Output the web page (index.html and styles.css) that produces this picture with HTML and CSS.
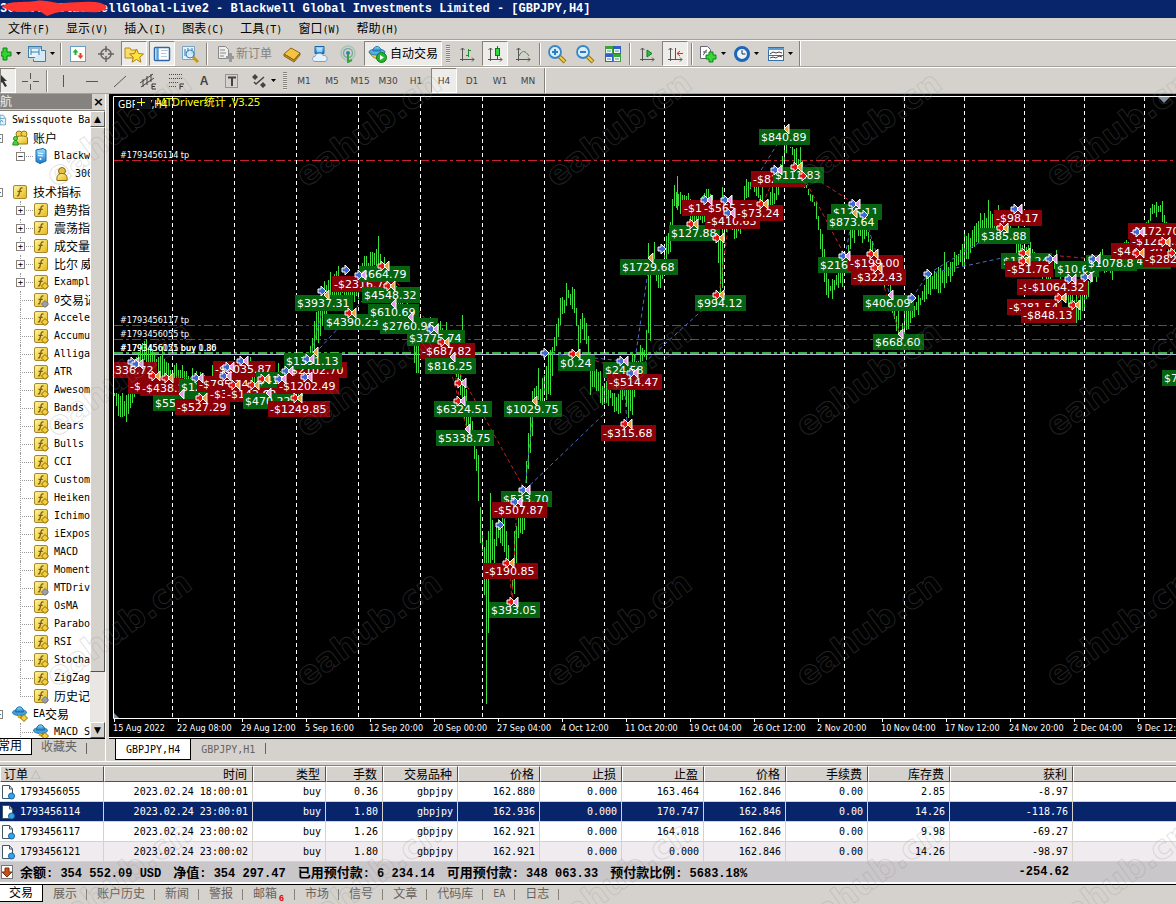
FILE: index.html
```html
<!DOCTYPE html>
<html lang="zh-CN">
<head>
<meta charset="utf-8">
<title>BlackwellGlobal-Live2 - [GBPJPY,H4]</title>
<link rel="stylesheet" href="styles.css">
</head>
<body>
<svg class="sprite" aria-hidden="true">
  <defs>
    <linearGradient id="gold" x1="0" y1="0" x2="1" y2="1"><stop offset="0" stop-color="#fff7a0"/><stop offset="1" stop-color="#e3b818"/></linearGradient>
    <linearGradient id="sky" x1="0" y1="0" x2="0" y2="1"><stop offset="0" stop-color="#9be0ff"/><stop offset="1" stop-color="#1878c8"/></linearGradient>
    <symbol id="fn" viewBox="0 0 16 16"><rect x="1.500" y="1.500" width="13" height="13" rx="1.500" fill="url(#gold)" stroke="#a8862a"/><path d="M10.500 4.200c-1.600-.8-2.300.3-2.600 2l-.9 4c-.3 1.500-.9 2-2 1.400M5.500 7.300h4.200" fill="none" stroke="#7d5a10" stroke-width="1.300"/></symbol>
    <symbol id="fc" viewBox="0 0 16 16"><use href="#fn"/><path d="M12 8.500l3.500 3.500-3.500 3.500-3.500-3.500z" fill="#f4cf3c" stroke="#8b6a12"/></symbol>
    <symbol id="fg" viewBox="0 0 16 16"><use href="#fn"/><path d="M12 8.500l3.500 3.500-3.500 3.500-3.500-3.500z" fill="#9aa0b0" stroke="#70758a"/></symbol>
    <symbol id="user" viewBox="0 0 16 16"><circle cx="8" cy="5" r="3.500" fill="#e4c044" stroke="#8b6c10"/><path d="M3 14.500c-1-5 2-7 5-7s6 2 5 7z" fill="url(#gold)" stroke="#8b6c10"/></symbol>
    <symbol id="users" viewBox="0 0 16 16"><circle cx="7" cy="4" r="3" fill="#f0d050" stroke="#9a7a18"/><circle cx="12" cy="4" r="3" fill="#f0d050" stroke="#9a7a18"/><path d="M4 14V7.500c1-2 10-2 11.500 0V14z" fill="url(#gold)" stroke="#9a7a18"/><circle cx="3.500" cy="8.500" r="2" fill="#5ad84c" stroke="#258a22"/><path d="M.8 15c0-6 5.500-6 5.500 0z" fill="#48d040" stroke="#258a22"/></symbol>
    <symbol id="server" viewBox="0 0 16 16"><path d="M3 2l7-1.500 3 1.500v11l-6 2.500-4-2z" fill="url(#sky)" stroke="#176aa8"/><path d="M5 5l5 .5M5 7.500l5 .5" stroke="#fff"/><circle cx="7.500" cy="11" r="1" fill="#fff"/></symbol>
    <symbol id="hat" viewBox="0 0 16 16"><ellipse cx="7.500" cy="6.500" rx="7" ry="3" fill="#3fa2dc" stroke="#1d6fa8"/><path d="M3.500 6c0-7 8-7 8 0z" fill="url(#sky)" stroke="#1d6fa8"/><path d="M6 10c2 1 3 2 5 2" stroke="#d9a520" stroke-width="3" fill="none"/><path d="M12 8.500l3.500 3.500-3.500 3.500-3.500-3.500z" fill="#f6cf3c" stroke="#8b6a12"/></symbol>
    <symbol id="home" viewBox="0 0 10 16"><path d="M0 2h4l3 4v8H0z" fill="#e9f5fc" stroke="#4a94bd"/><path d="M0 6h6M0 11l2-3 2 3" stroke="#4a94bd" fill="none"/></symbol>
    <symbol id="doc" viewBox="0 0 16 16"><path d="M2.500 1.500h7l3 3.500v9.500h-10z" fill="#fff" stroke="#3c5666"/><path d="M9.500 1.500V5h3" fill="none" stroke="#3c5666"/><circle cx="11.500" cy="12" r="3" fill="#36a4e4" stroke="#1765a4"/></symbol>
    <symbol id="caret" viewBox="0 0 7 4"><path d="M1 0h5L3.500 3z" fill="#000"/></symbol>
    <symbol id="axes" viewBox="0 0 18 18"><path d="M4.500 3v13M2 14.500h14M2.500 5l2-2 2 2M14 12.500l2 2-2 2" fill="none" stroke="#555"/></symbol>
    <symbol id="glass" viewBox="0 0 20 20"><path d="M12 12l6 6" stroke="#9a7408" stroke-width="4"/><path d="M12 12l5.500 5.500" stroke="#f0cf4a" stroke-width="2"/><circle cx="8" cy="8" r="6" fill="#d5efff" stroke="#3a86c4" stroke-width="1.800"/></symbol>
  </defs>
</svg>

<header class="title">
  <h1>300000: BlackwellGlobal-Live2 - Blackwell Global Investments Limited - [GBPJPY,H4]</h1>
  <svg class="scribble" width="112" height="18" aria-hidden="true"><path d="M2 7C8 0 24 3 36 1c10-2 18 3 28 2 16-1 34-3 41 2 4 3-1 6-7 7-10 1-28-2-38 0l-5 1-8 3-6-4-3-1C28 12 14 13 9 10z" fill="#ff3430"/></svg>
</header>

<nav class="menu">
  <button>文件<i>(F)</i></button><button>显示<i>(V)</i></button><button>插入<i>(I)</i></button><button>图表<i>(C)</i></button><button>工具<i>(T)</i></button><button>窗口<i>(W)</i></button><button>帮助<i>(H)</i></button>
</nav>

<div class="bar" role="toolbar" aria-label="标准">
  <button class="tb first" aria-label="新图表"><svg width="12" height="18"><path d="M0 7h2V3h4v4h4v4H6v4H2v-4H0z" fill="#2fd42c" stroke="#0b8414"/></svg><svg class="car"><use href="#caret"/></svg></button>
  <button class="tb wide" aria-label="配置"><svg width="20" height="18"><rect x="1.500" y="1.500" width="13" height="11" fill="#e6f3fb" stroke="#3c7dae"/><path d="M6.500 14v2.500h12v-11H15" fill="#d4e9f6" stroke="#3c7dae"/><path d="M4 4v6M4 7h8M12 4v6M2 3h12" stroke="#3c7dae" fill="none"/></svg><svg class="car"><use href="#caret"/></svg></button>
  <span class="sep"></span>
  <button class="tb" aria-label="市场报价"><svg width="18" height="18"><rect x="1.500" y="1.500" width="15" height="15" fill="#fff" stroke="#64a0c4"/><path d="M6.500 4l3 3.500h-2V10h-2V7.500h-2z" fill="#24b12c"/><path d="M11.500 14l-3-3.500h2V8h2v2.500h2z" fill="#e0442e"/></svg></button>
  <button class="tb" aria-label="数据窗口"><svg width="18" height="18"><circle cx="9" cy="9" r="5" fill="none" stroke="#666" stroke-width="1.500"/><path d="M9 1v6M9 11v6M1 9h6M11 9h6" stroke="#666" stroke-width="1.500"/></svg></button>
  <button class="tb on" aria-label="导航"><svg width="20" height="18"><path d="M1 3h5l1 2h5v8H1z" fill="#fbdc6c" stroke="#b08a20"/><path d="M12.500 4l2 4.500 5 .5-3.800 3.200 1.200 5-4.400-2.700-4.400 2.700 1.200-5L5.500 9l5-.5z" fill="#ffe23c" stroke="#a8820e"/></svg></button>
  <button class="tb on" aria-label="终端"><svg width="18" height="18"><rect x="1.500" y="2.500" width="15" height="13" rx="1" fill="#fff" stroke="#2a67a8" stroke-width="1.500"/><path d="M4.500 3v12" stroke="#5ba0dc" stroke-width="2.500"/><path d="M8 5.500h7M8 8.500h5M8 11.500h6" stroke="#b4c8d8"/></svg></button>
  <button class="tb" aria-label="策略测试"><svg width="18" height="18"><path d="M1.500 1.500h12v13h-12z" fill="#e6f2fa" stroke="#7ba4c0"/><path d="M4 4v7M7 3v5M11 3v6" stroke="#2c78b4"/><path d="M12 12l5 5" stroke="#c69a18" stroke-width="3"/><circle cx="9" cy="9" r="4" fill="#cfeaff" fill-opacity=".7" stroke="#3b82b8"/></svg></button>
  <span class="sep"></span>
  <button class="tb order" disabled><svg width="18" height="18"><path d="M2.500 1.500h7l3 3v9h-10z" fill="#eee" stroke="#888"/><path d="M4 5h5M4 8h6M4 11h4" stroke="#888"/><path d="M10 11h3V8h3v3h3v3h-3v3h-3v-3h-3z" fill="#999"/></svg>新订单</button>
  <button class="tb" aria-label="MetaEditor"><svg width="20" height="18"><path d="M2 9l7-6 9 5-6 7z" fill="#f5c341" stroke="#8c650c"/><path d="M2 9l10 6 6-7v2l-6 7-10-6z" fill="#c9922a" stroke="#8c650c"/></svg></button>
  <button class="tb" aria-label="云"><svg width="18" height="18"><path d="M4 1.500h9v7H4z" fill="url(#sky)" stroke="#1664a4"/><path d="M6 4h5M6 6h5" stroke="#fff"/><path d="M4 16.500c-4-1-3-5 0-5 1-4 7-4 8-1 4-1 6 5 2 6z" fill="#e8f0fa" stroke="#7f9fbd"/></svg></button>
  <button class="tb" aria-label="信号"><svg width="18" height="18" fill="none"><circle cx="9" cy="8" r="7" stroke="#a4c4b4" stroke-width="1.500"/><circle cx="9" cy="8" r="4.500" stroke="#76a9a4" stroke-width="1.500"/><circle cx="9" cy="8" r="2" fill="#2880bc"/><path d="M9 9v8l4-2" stroke="#3aa33e" stroke-width="2"/></svg></button>
  <button class="tb on auto"><svg width="20" height="18"><path d="M2 8c3 6 9 8 13 1z" fill="#f4cd4c" stroke="#a1791c"/><ellipse cx="9" cy="7" rx="8" ry="3" fill="#56b0e4" stroke="#2578ae"/><path d="M5 6c0-6 8-6 8 0z" fill="url(#sky)" stroke="#2578ae"/><circle cx="13.500" cy="12.500" r="5" fill="#23b52c" stroke="#0c7b18"/><path d="M12 10l4 2.500-4 2.500z" fill="#fff"/></svg>自动交易</button>
  <span class="grip"></span>
  <button class="tb" aria-label="柱状图"><svg width="18" height="18"><use href="#axes"/><path d="M10.500 4v8M8 10.500h2.500M10.500 5.500H13" stroke="#1c8f2c" fill="none"/></svg></button>
  <button class="tb on" aria-label="蜡烛图"><svg width="18" height="18"><use href="#axes"/><path d="M11.500 1v13" stroke="#0c7b1c"/><rect x="9.500" y="3.500" width="4" height="7" fill="#2fd83c" stroke="#0c7b1c"/></svg></button>
  <button class="tb" aria-label="折线图"><svg width="18" height="18"><use href="#axes"/><path d="M5 11c3-6 6-6 10 0" stroke="#2d9a3c" fill="none"/></svg></button>
  <span class="sep"></span>
  <button class="tb" aria-label="放大"><svg width="20" height="20"><use href="#glass"/><path d="M5 8h6M8 5v6" stroke="#2b7cc0" stroke-width="2"/></svg></button>
  <button class="tb" aria-label="缩小"><svg width="20" height="20"><use href="#glass"/><path d="M5 8h6" stroke="#2b7cc0" stroke-width="2"/></svg></button>
  <button class="tb" aria-label="平铺"><svg width="18" height="18"><path d="M1 1h8v8H1z" fill="#3ba534"/><path d="M9 1h8v8H9z" fill="#2f60c4"/><path d="M1 9h8v8H1z" fill="#2f60c4"/><path d="M9 9h8v8H9z" fill="#3ba534"/><path d="M2 4h6v4H2zM10 4h6v4h-6zM2 12h6v4H2zM10 12h6v4h-6z" fill="#eef8ee"/><path d="M3 6h4M11 6h4M3 14h4M11 14h4" stroke="#5a8ab0"/></svg></button>
  <span class="sep"></span>
  <button class="tb" aria-label="自动滚动"><svg width="18" height="18"><use href="#axes"/><path d="M9 5l5 3.500L9 12z" fill="#2cbf3a" stroke="#0f7d1f"/></svg></button>
  <button class="tb on" aria-label="图表平移"><svg width="18" height="18"><use href="#axes"/><path d="M9.500 3v11" stroke="#555"/><path d="M17 8.500h-5M14 6l-3 2.500 3 2.500" fill="none" stroke="#c23222"/></svg></button>
  <span class="sep"></span>
  <button class="tb wide" aria-label="指标"><svg width="20" height="18"><path d="M2.500 1.500h7l3 3v9h-10z" fill="#fff" stroke="#667"/><path d="M5 10c2 0 1-5 4-5M5 7h4" stroke="#555" fill="none"/><path d="M8 10h3V7h4v3h3v4h-3v3h-4v-3H8z" fill="#34d834" stroke="#0c8418"/></svg><svg class="car"><use href="#caret"/></svg></button>
  <button class="tb wide" aria-label="周期"><svg width="18" height="18"><circle cx="9" cy="9" r="6.500" fill="#e8f5ff" stroke="#1d66b8" stroke-width="3"/><path d="M9 5v4h3.500" stroke="#333" fill="none"/></svg><svg class="car"><use href="#caret"/></svg></button>
  <button class="tb wide" aria-label="模板"><svg width="18" height="18"><rect x="1.500" y="2.500" width="15" height="13" fill="#fff" stroke="#3570a8"/><path d="M1 4h16" stroke="#5b9ed4" stroke-width="2"/><path d="M3 9l3-2 3 1 3-1 3 1M3 13l3-1 3 1 3-2 3 1" stroke="#444" fill="none"/><path d="M2 10.500h14" stroke="#3570a8"/></svg><svg class="car"><use href="#caret"/></svg></button>
  <span class="end"></span>
</div>

<div class="bar tools" role="toolbar" aria-label="画线">
  <button class="tb on cursor" aria-label="光标"><svg width="12" height="18"><path d="M0 3l6 6H3l3 5-2 1-3-5-1 1z" fill="#333"/></svg></button>
  <button class="tb" aria-label="十字线"><svg width="18" height="18"><path d="M9.500 1v6M9.500 12v6M1 9.500h6M12 9.500h6" stroke="#555"/></svg></button>
  <span class="sep"></span>
  <button class="tb" aria-label="垂直线"><svg width="18" height="18"><path d="M8.500 3v12" stroke="#555"/></svg></button>
  <button class="tb" aria-label="水平线"><svg width="18" height="18"><path d="M3 9.500h12" stroke="#555"/></svg></button>
  <button class="tb" aria-label="趋势线"><svg width="18" height="18"><path d="M3 15L15 4" stroke="#555"/></svg></button>
  <button class="tb" aria-label="通道"><svg width="18" height="18"><path d="M1 11L14 2M2 15L15 6M4 7v8M8 4v9M12 2v8" stroke="#444"/><path d="M17 12h-4v5h4M13 14.500h3" stroke="#333" fill="none"/></svg></button>
  <button class="tb" aria-label="斐波那契"><svg width="18" height="18"><path d="M2 2.500h14M2 6.500h14M2 10.500h10" stroke="#444" stroke-dasharray="1 1"/><path d="M2 14.500h8" stroke="#444" stroke-dasharray="1 1"/><path d="M17 12h-4v5.500M13 14.500h3" stroke="#333" fill="none"/></svg></button>
  <button class="tb letter">A</button>
  <button class="tb" aria-label="文本标签"><svg width="18" height="18"><rect x="2.500" y="2.500" width="12" height="13" fill="none" stroke="#555" stroke-dasharray="1 1"/><path d="M5 5.500h8M9 5v9" stroke="#444" stroke-width="2"/></svg></button>
  <button class="tb wide" aria-label="箭头"><svg width="18" height="18"><path d="M2 5l3-3 3 3-3 3zM10 13l3-3 3 3-3 3z" fill="#444"/><path d="M4 10l2 2 8-7" stroke="#444" stroke-width="1.500" fill="none"/></svg><svg class="car"><use href="#caret"/></svg></button>
  <span class="grip"></span>
  <button class="tb">M1</button><button class="tb">M5</button><button class="tb">M15</button><button class="tb">M30</button><button class="tb">H1</button><button class="tb on">H4</button><button class="tb">D1</button><button class="tb">W1</button><button class="tb">MN</button>
  <span class="end"></span>
</div>

<main class="work">
  <aside class="nav">
    <div class="navhead"><h2>航</h2><button aria-label="关闭">×</button></div>
    <div class="treebox">
      <ul class="tree">
        <li class="top"><svg class="half"><use href="#home"/></svg>Swissquote Bank</li>
        <li class="l0"><b class="box">−</b><svg><use href="#users"/></svg><span class="cj">账户</span></li>
        <li class="l1"><b class="box">−</b><svg><use href="#server"/></svg>Blackwell</li>
        <li class="l2"><svg><use href="#user"/></svg>300000</li>
        <li class="l0"><b class="box">−</b><svg><use href="#fn"/></svg><span class="cj">技术指标</span></li>
        <li class="l1"><b class="box">+</b><svg><use href="#fn"/></svg><span class="cj">趋势指标</span></li>
        <li class="l1"><b class="box">+</b><svg><use href="#fn"/></svg><span class="cj">震荡指标</span></li>
        <li class="l1"><b class="box">+</b><svg><use href="#fn"/></svg><span class="cj">成交量</span></li>
        <li class="l1"><b class="box">+</b><svg><use href="#fn"/></svg><span class="cj">比尔 威廉</span></li>
        <li class="l1"><b class="box">+</b><svg><use href="#fc"/></svg>Examples</li>
        <li class="l1 leaf"><svg><use href="#fg"/></svg>0<span class="cj">交易记录</span></li>
        <li class="l1 leaf"><svg><use href="#fc"/></svg>Accelerator</li>
        <li class="l1 leaf"><svg><use href="#fc"/></svg>Accumulation</li>
        <li class="l1 leaf"><svg><use href="#fc"/></svg>Alligator</li>
        <li class="l1 leaf"><svg><use href="#fc"/></svg>ATR</li>
        <li class="l1 leaf"><svg><use href="#fc"/></svg>Awesome</li>
        <li class="l1 leaf"><svg><use href="#fc"/></svg>Bands</li>
        <li class="l1 leaf"><svg><use href="#fc"/></svg>Bears</li>
        <li class="l1 leaf"><svg><use href="#fc"/></svg>Bulls</li>
        <li class="l1 leaf"><svg><use href="#fc"/></svg>CCI</li>
        <li class="l1 leaf"><svg><use href="#fc"/></svg>Custom</li>
        <li class="l1 leaf"><svg><use href="#fc"/></svg>Heiken Ashi</li>
        <li class="l1 leaf"><svg><use href="#fc"/></svg>Ichimoku</li>
        <li class="l1 leaf"><svg><use href="#fc"/></svg>iExposure</li>
        <li class="l1 leaf"><svg><use href="#fc"/></svg>MACD</li>
        <li class="l1 leaf"><svg><use href="#fc"/></svg>Momentum</li>
        <li class="l1 leaf"><svg><use href="#fg"/></svg>MTDriver</li>
        <li class="l1 leaf"><svg><use href="#fc"/></svg>OsMA</li>
        <li class="l1 leaf"><svg><use href="#fc"/></svg>Parabolic</li>
        <li class="l1 leaf"><svg><use href="#fc"/></svg>RSI</li>
        <li class="l1 leaf"><svg><use href="#fc"/></svg>Stochastic</li>
        <li class="l1 leaf"><svg><use href="#fc"/></svg>ZigZag</li>
        <li class="l1 leaf last"><svg><use href="#fg"/></svg><span class="cj">历史记录</span></li>
        <li class="l0"><b class="box">−</b><svg><use href="#hat"/></svg>EA<span class="cj">交易</span></li>
        <li class="l1 leaf"><svg><use href="#hat"/></svg>MACD Sample</li>
      </ul>
      <div class="scroll"><button aria-label="向上">▲</button><span class="thumb"></span><button aria-label="向下">▼</button></div>
    </div>
    <div class="navtabs"><button class="sel">常用</button><button>收藏夹</button><span class="bar1"></span></div>
  </aside>
  <section class="chartcol">
    <svg class="chart" role="img" aria-label="GBPJPY,H4"><g id="plot" transform="translate(-109,-94)"></g></svg>
    <div class="charttabs"><button class="sel">GBPJPY,H4</button><button>GBPJPY,H1</button><span class="bar1"></span></div>
  </section>
</main>

<section class="terminal">
  <table class="orders">
    <colgroup><col class="c-id"><col class="c-time"><col class="c-type"><col class="c-lot"><col class="c-sym"><col class="c-n"><col class="c-n"><col class="c-n"><col class="c-n"><col class="c-n"><col class="c-n"><col class="c-profit"><col></colgroup>
    <thead><tr><th>订单 <small>△</small></th><th>时间</th><th>类型</th><th>手数</th><th>交易品种</th><th>价格</th><th>止损</th><th>止盈</th><th>价格</th><th>手续费</th><th>库存费</th><th>获利</th><th></th></tr></thead>
    <tbody>
      <tr><td><svg><use href="#doc"/></svg>1793456055</td><td>2023.02.24 18:00:01</td><td>buy</td><td>0.36</td><td>gbpjpy</td><td>162.880</td><td>0.000</td><td>163.464</td><td>162.846</td><td>0.00</td><td>2.85</td><td>-8.97</td><td></td></tr>
      <tr class="picked"><td><svg><use href="#doc"/></svg>1793456114</td><td>2023.02.24 23:00:01</td><td>buy</td><td>1.80</td><td>gbpjpy</td><td>162.936</td><td>0.000</td><td>170.747</td><td>162.846</td><td>0.00</td><td>14.26</td><td>-118.76</td><td></td></tr>
      <tr><td><svg><use href="#doc"/></svg>1793456117</td><td>2023.02.24 23:00:02</td><td>buy</td><td>1.26</td><td>gbpjpy</td><td>162.921</td><td>0.000</td><td>164.018</td><td>162.846</td><td>0.00</td><td>9.98</td><td>-69.27</td><td></td></tr>
      <tr class="alt"><td><svg><use href="#doc"/></svg>1793456121</td><td>2023.02.24 23:00:02</td><td>buy</td><td>1.80</td><td>gbpjpy</td><td>162.921</td><td>0.000</td><td>0.000</td><td>162.846</td><td>0.00</td><td>14.26</td><td>-98.97</td><td></td></tr>
    </tbody>
  </table>
  <div class="summary">
    <svg width="14" height="16"><rect x="1.500" y="1.500" width="11" height="13" fill="#fff" stroke="#777"/><path d="M5 4h4v4h3l-5 5-5-5h3z" fill="#c8501c" stroke="#7e2c0c"/></svg>
    <div class="facts"><span>余额<i>: 354 552.09 USD</i></span><span>净值<i>: 354 297.47</i></span><span>已用预付款<i>: 6 234.14</i></span><span>可用预付款<i>: 348 063.33</i></span><span>预付款比例<i>: 5683.18%</i></span></div>
    <output>-254.62</output>
  </div>
  <div class="termtabs">
    <button class="sel">交易</button><button>展示</button><button>账户历史</button><button>新闻</button><button>警报</button><button class="mail">邮箱<sub>6</sub></button><button>市场</button><button>信号</button><button>文章</button><button>代码库</button><button class="ea">EA</button><button>日志</button>
  </div>
</section>

<svg class="mark" aria-hidden="true" id="mark"></svg>
<script src="chart.js"></script>
</body>
</html>
```

FILE: styles.css
```css
* { box-sizing: border-box; }
html, body { height: 100%; }
body {
  margin: 0;
  display: flex;
  flex-direction: column;
  overflow: hidden;
  position: relative;
  background: #d5d2cd;
  color: #000;
  font: 12px/18px "Liberation Sans", "Noto Sans CJK SC", sans-serif;
}
button { font: inherit; color: inherit; background: none; border: 0; padding: 0; margin: 0; white-space: nowrap; }
i { font: 10px "DejaVu Sans Mono", monospace; }
.sprite { position: absolute; width: 0; height: 0; }

.title { position: relative; height: 18px; background: #08246b; color: #fff; overflow: hidden; flex: none; }
.title h1 { margin: 0; font: bold 12px/18px "Liberation Mono", monospace; white-space: pre; }
.scribble { position: absolute; left: 0; top: 0; }

.menu { display: flex; height: 22px; flex: none; padding-left: 8px; gap: 16px; border-bottom: 1px solid #a5a29c; }
.menu button { line-height: 20px; }

.bar { display: flex; align-items: center; height: 27px; flex: none; border-top: 1px solid #fff; border-bottom: 1px solid #a5a29c; }
.tb { display: flex; align-items: center; justify-content: center; flex: none; width: 28px; height: 25px; border: 1px solid transparent; }
.tb svg { flex: none; }
.tb .car { width: 7px; height: 4px; margin-left: 2px; }
.tb.on { background: #eeece8; border-color: #85827c #fff #fff #85827c; margin: 0 1px; width: 26px; }
.tb.first { width: 24px; justify-content: flex-start; }
.tb.wide { width: 34px; }
.tb.order { width: 68px; gap: 2px; color: #85827c; font-size: 12px; }
.tb.auto { width: 78px; gap: 2px; margin-left: 2px; }
.sep { width: 2px; height: 22px; margin: 0 2px; border-left: 1px solid #85827c; border-right: 1px solid #fff; flex: none; }
.grip { width: 4px; height: 18px; margin: 0 3px; flex: none; background: repeating-linear-gradient(#85827c 0 1px, #e8e6e2 1px 2px); }
.end { width: 2px; height: 25px; margin-left: 2px; border-left: 1px solid #85827c; border-right: 1px solid #fff; }
.tools { color: #444; font: 9px "DejaVu Sans", sans-serif; }
.tools .cursor { width: 16px; margin: 0; justify-content: flex-start; }
.tools .letter { font: bold 12px "Liberation Sans", sans-serif; }

.work { flex: 1; min-height: 0; display: flex; }
.nav { width: 106px; flex: none; display: flex; flex-direction: column; border-right: 1px solid #fff; }
.navhead { display: flex; height: 16px; flex: none; }
.navhead h2 { margin: 0; flex: 1; font: 12px/14px "Noto Sans CJK SC", sans-serif; color: #eee; background: #85827f; height: 15px; }
.navhead button { width: 13px; font: bold 13px/14px "DejaVu Sans", sans-serif; }
.treebox { flex: 1; min-height: 0; display: flex; background: #fff; border-top: 1px solid #85827c; }
.tree { flex: 1; min-width: 0; margin: 0; padding: 0; overflow: hidden; list-style: none; font: 10px/18px "DejaVu Sans Mono", monospace; }
.tree li { display: flex; align-items: center; height: 18px; white-space: pre; position: relative; }
.tree svg { width: 16px; height: 16px; flex: none; margin-right: 5px; z-index: 1; }
.tree .half { width: 8px; margin-right: 4px; }
.tree .l0 { padding-left: 12px; }
.tree .l1 { padding-left: 33px; }
.tree .l2 { padding-left: 54px; }
.cj { font: 12px/18px "Noto Sans CJK SC", sans-serif; }
.tree .box { position: absolute; left: 16px; top: 5px; width: 9px; height: 9px; border: 1px solid #85827c; background: #fff; font: 9px/6px "DejaVu Sans Mono", monospace; text-align: center; z-index: 1; }
.tree .l0 .box { left: -6px; }
.tree .l1::before { content: ""; position: absolute; left: 20px; top: 0; width: 12px; height: 9px; border-left: 1px dotted #999; border-bottom: 1px dotted #999; }
.tree .leaf:not(.last)::after { content: ""; position: absolute; left: 20px; top: 9px; height: 9px; border-left: 1px dotted #999; }
.scroll { width: 15px; flex: none; display: flex; flex-direction: column; background: #e9e7e3; }
.scroll button { height: 16px; font: 9px/12px "DejaVu Sans", sans-serif; }
.scroll button, .thumb { background: #d5d2cd; border: 1px solid; border-color: #fff #55524e #55524e #fff; }
.thumb { height: 87%; }
.scroll button:last-child { margin-top: auto; }
.navtabs, .charttabs { display: flex; align-items: flex-start; flex: none; }
.navtabs { height: 23px; border-top: 1px solid #000; color: #66635f; }
.navtabs button { height: 16px; line-height: 15px; padding: 0 9px; }
.navtabs .sel { width: 32px; padding: 0; text-align: left; text-indent: -2px; background: #fff; color: #000; border: solid #000; border-width: 0 1px 1px 0; }
.bar1 { width: 1px; height: 11px; margin-top: 4px; background: #66635f; }
.chartcol { flex: 1; min-width: 0; display: flex; flex-direction: column; margin-left: 3px; }
.chart { flex: 1; min-height: 0; width: 100%; display: block; background: #000; border-bottom: 1px solid #fff; }
.charttabs { height: 23px; border-top: 1px solid #000; padding-left: 6px; color: #66635f; font: 10px "DejaVu Sans Mono", monospace; }
.charttabs button { height: 21px; padding: 0 10px; }
.charttabs .sel { background: #fff; color: #000; border: solid #000; border-width: 0 1px 1px; }

.chart text { fill: #fff; font: 9px "DejaVu Sans Condensed", "DejaVu Sans", sans-serif; }
.chart .pl { font: 11px "DejaVu Sans", sans-serif; }
.chart .head { font: 10px "Noto Sans", sans-serif; }
.chart .driver { fill: #ffff00; font: 11px "Noto Sans", "Noto Sans CJK SC", sans-serif; }

.terminal { flex: none; border-top: 1px solid #fff; padding-top: 3px; }
.orders { width: 100%; table-layout: fixed; border-collapse: separate; border-spacing: 0; background: #fff; border-top: 1px solid #85827c; font: 10px/18px "DejaVu Sans Mono", monospace; }
.c-id { width: 104px; } .c-time { width: 149px; } .c-type { width: 73px; } .c-lot { width: 57px; }
.c-sym { width: 75px; } .c-n { width: 82px; } .c-profit { width: 123px; }
.orders th { height: 16px; padding: 0 5px; font: 12px/14px "Noto Sans CJK SC", sans-serif; text-align: right; background: #d5d2cd; border: 1px solid; border-color: #fff #55524e #55524e #fff; white-space: nowrap; }
.orders th:first-child, .orders td:first-child { text-align: left; padding-left: 3px; }
.orders th small { color: #aaa7a2; font-size: 10px; line-height: 10px; }
.orders td { height: 20px; padding: 0 4px; text-align: right; white-space: nowrap; border-right: 1px solid #d5d2cd; border-bottom: 1px solid #d5d2cd; }
.orders td:first-child { padding-left: 0; }
.orders td:last-child, .orders th:last-child { border-right: 0; }
.orders td svg { width: 16px; height: 16px; margin-right: 4px; vertical-align: middle; }
.picked td { background: #08246b; color: #fff; }
.alt td { background: #efebef; }
.summary { display: flex; align-items: center; height: 20px; background: #c9c7c9; font: bold 13px/18px "Noto Sans CJK SC", sans-serif; white-space: pre; }
.summary svg { margin-right: 6px; flex: none; }
.summary i { font: bold 12px "Liberation Mono", monospace; }
.facts { display: flex; flex: none; gap: 12px; width: 870px; }
.summary output { width: 179px; text-align: right; font: bold 12px "Liberation Mono", monospace; }
.termtabs { display: flex; height: 20px; margin-top: 2px; border-top: 1px solid #000; box-shadow: 0 -2px #fff; color: #66635f; }
.termtabs button { height: 17px; line-height: 16px; padding: 0 10px; position: relative; }
.termtabs button:not(.sel)::after { content: ""; position: absolute; right: 0; top: 4px; width: 1px; height: 11px; background: #85827c; }
.termtabs .sel { padding: 0 9px; background: #fff; color: #000; border: solid #000; border-width: 0 1px 1px 0; }
.termtabs .mail { padding-right: 18px; }
.termtabs sub { position: absolute; left: 36px; bottom: -2px; color: #e00; font: bold 9px/12px "Liberation Sans", sans-serif; }
.termtabs .ea { font: 10px "DejaVu Sans Mono", monospace; }

.mark { position: absolute; left: 0; top: 0; width: 100%; height: 100%; pointer-events: none; }
.mark text { font: bold 33px "DejaVu Sans", sans-serif; fill: none; stroke: #8c8c8c; stroke-opacity: .25; text-anchor: middle; }
```

FILE: chart.js
```javascript
const plot = document.getElementById('plot');
const NS = 'http://www.w3.org/2000/svg';
function add(tag, attrs, text, parent = plot) {
  const e = document.createElementNS(NS, tag);
  for (const k in attrs) e.setAttribute(k, attrs[k]);
  if (text) e.textContent = text;
  parent.appendChild(e);
  return e;
}

// Period separators
const grid = [172, 234, 296, 358, 420, 482, 544];
for (let x = 604; x < 2600; x += 60) grid.push(x);

// Price levels
function level(y, stroke, width, dash) {
  add('path', { d: `M114 ${y}H2600`, stroke, 'stroke-width': width, 'stroke-dasharray': dash });
}
level(160.5, '#c8202c', 1, '9 3 3 3');
level(325.5, '#c8202c', 1, '9 3 3 3');
level(339.5, '#c8202c', 1, '9 3 3 3');
level(354.5, '#b0b4d8', 1, 'none');
level(353, '#3cb43c', 2, '9 3 3 3');

// Price range by time: x, high, low
const range = [114,385,400,118,388,415,124,395,422,128,388,415,132,370,400,140,345,380,144,338,365,150,345,365,155,350,370,164,355,385,170,368,390,178,362,380,190,370,392,205,372,400,220,365,395,232,370,395,245,365,390,260,375,400,275,375,400,290,370,395,300,375,400,306,360,385,312,330,360,316,310,345,322,300,330,328,280,310,335,268,300,345,280,300,358,275,298,365,255,280,375,252,270,379,245,268,385,265,290,395,285,310,405,300,325,412,325,350,417,340,375,425,325,345,433,315,335,440,318,345,450,335,365,460,370,395,465,385,430,470,405,440,475,430,460,477,450,490,480,500,540,482,530,555,484,540,600,486,570,700,488,540,640,490,500,570,494,530,562,498,515,540,502,520,545,506,530,560,509,555,575,512,575,590,514,530,600,517,520,545,520,500,530,524,500,530,526,460,490,529,420,465,532,385,440,536,378,405,540,380,405,545,365,400,550,345,395,553,335,360,557,320,345,561,300,320,565,290,315,568,286,305,575,290,312,578,320,350,582,315,335,587,325,350,590,355,395,595,362,385,600,375,400,605,380,405,610,385,405,615,390,410,620,385,412,624,375,400,628,365,420,632,350,415,636,360,385,640,345,365,644,348,362,646,330,360,648,245,330,650,260,340,652,250,270,655,255,280,659,265,298,662,255,285,665,245,270,670,220,250,673,180,215,677,185,205,680,190,215,690,195,220,695,205,230,700,200,225,708,190,215,712,190,230,716,210,240,718,240,270,720,240,300,722,230,290,724,200,235,730,205,235,735,215,240,740,205,230,745,180,200,750,180,195,753,168,190,758,180,200,763,200,215,768,195,210,773,190,205,778,170,195,782,150,180,785,132,150,788,135,150,792,145,160,797,155,170,802,160,180,807,180,195,812,190,205,817,205,225,822,230,260,825,250,290,829,280,298,833,275,295,838,270,290,842,260,285,846,250,270,849,230,250,853,215,240,858,215,235,863,220,240,868,230,245,872,240,255,876,255,275,880,260,280,884,270,290,888,265,285,892,290,315,896,310,335,900,325,345,904,305,340,908,295,325,912,300,320,920,290,310,925,275,300,930,272,300,935,270,290,940,265,290,950,260,280,955,250,272,960,245,262,965,240,265,970,230,260,975,222,245,980,215,240,992,208,235,996,204,230,1000,210,240,1010,220,240,1020,235,255,1030,245,265,1040,255,275,1050,265,285,1056,250,270,1060,270,290,1065,280,305,1070,290,310,1075,295,320,1078,300,325,1082,285,310,1087,280,300,1090,270,290,1095,255,280,1100,245,270,1105,255,275,1110,260,278,1115,250,275,1120,245,265,1130,240,260,1140,230,255,1147,215,240,1150,205,225,1155,200,215,1160,198,215,1163,202,225,1168,235,255,1176,240,260];
let seed = 7;
const rnd = () => (seed = (seed * 16807) % 2147483647) / 2147483647;
let bars = '';
for (let x = 114, i = 0; x <= 1176; x += 2) {
  while (i + 3 < range.length - 3 && range[i + 3] < x) i += 3;
  const t = Math.min(1, (x - range[i]) / (range[i + 3] - range[i]));
  const hi = range[i + 1] + (range[i + 4] - range[i + 1]) * t;
  const lo = range[i + 2] + (range[i + 5] - range[i + 2]) * t;
  const spike = rnd() > 0.92 ? 10 : 0;
  bars += `M${x + 0.5} ${Math.round(hi + rnd() * 11 - 2 - spike)}V${Math.round(lo + rnd() * 11 - 7)}`;
}
bars += 'M486.500 540V704M378.500 236V260M462.500 315V345M677.500 176V210M722.500 187V240M490.500 493V560M407.500 295V330';
add('path', { d: bars, stroke: '#3ce03c' });
grid.forEach(x => add('path', { d: `M${x + 0.5} 97V718`, stroke: '#fff', 'stroke-dasharray': '4 3' }));

// Links between entry and exit
const blue = [[310,359,326,295],[310,359,352,313],[352,313,392,265],[525,490,534,401],[525,490,604,414],[633,373,650,258],[500,525,517,502],[633,373,719,295],[662,249,693,224],[727,200,763,204],[750,188,786,130],[845,256,855,204],[864,215,890,295],[928,274,1003,228],[928,274,1025,253],[912,298,928,274],[1095,259,1139,253],[1087,277,1165,242],[545,353,623,361],[623,361,627,424],[229,367,254,385],[1071,279,1061,298]];
const red = [[384,266,433,329],[390,286,443,343],[443,343,525,490],[443,343,467,429],[452,357,460,401],[509,563,512,602],[517,502,512,602],[575,354,633,373],[719,295,730,213],[797,167,855,204],[803,176,845,256],[873,254,900,334],[1025,253,1095,259],[1075,305,1087,277],[763,204,777,170],[155,376,198,378],[235,385,281,379]];
for (const [set, stroke] of [[blue, '#5068c8'], [red, '#c82020']])
  for (const [a, b, c, d] of set) add('path', { d: `M${a} ${b}L${c} ${d}`, stroke, 'stroke-dasharray': '4 3' });

// Profit and loss tags
const tags = [[102,362,'-$336.72'],[128,378,'-$120.33'],[140,380,'-$438.11'],[153,395,'$550.13'],[179,379,'$123.40'],[175,399,'-$527.29'],[213,361,'-$2035.87'],[197,376,'-$795.14'],[208,386,'-$310.26'],[225,386,'-$142.62'],[256,372,'$415.30'],[243,393,'$470.22'],[285,362,'-$2102.70'],[284,353,'$1391.13'],[277,378,'-$1202.49'],[268,401,'-$1249.85'],[295,295,'$3937.31'],[332,276,'-$2316.74'],[324,314,'$4390.23'],[359,266,'$664.79'],[362,287,'$4548.32'],[368,304,'$610.69'],[380,318,'$2760.96'],[407,330,'$3775.74'],[420,343,'-$687.82'],[425,358,'$816.25'],[434,401,'$6324.51'],[436,430,'$5338.75'],[504,401,'$1029.75'],[558,355,'$0.24'],[603,362,'$24.58'],[607,374,'-$514.47'],[601,425,'-$315.68'],[501,491,'$533.70'],[492,502,'-$507.87'],[483,563,'-$190.85'],[489,602,'$393.05'],[620,259,'$1729.68'],[669,225,'$127.88'],[682,200,'-$125.61'],[702,200,'-$565.28'],[705,213,'-$410.63'],[735,205,'-$73.24'],[751,171,'-$820.55'],[773,167,'$111.83'],[759,129,'$840.89'],[695,295,'$994.12'],[831,204,'$125.11'],[827,214,'$873.64'],[818,257,'$216.50'],[848,255,'-$199.00'],[851,269,'-$322.43'],[863,295,'$406.09'],[873,334,'$668.60'],[994,210,'-$98.17'],[979,228,'$385.88'],[1001,253,'$125.24'],[1005,261,'-$51.76'],[1055,261,'$10.65'],[1120,253,'$145.20'],[1086,255,'$1078.8'],[1017,279,'-$164.02'],[1026,279,'-$1064.32'],[1007,299,'-$281.54'],[1021,307,'-$848.13'],[1111,243,'-$412.30'],[1130,233,'-$1230.15'],[1128,223,'-$172.70'],[1143,251,'-$282.10'],[1162,370,'$75.30']];
for (const [x, y, s] of tags) {
  const w = Math.round([...s].reduce((n, c) => n + (c === '.' ? 3.5 : c === '-' ? 4 : 7), 5));
  add('rect', { x, y, width: w, height: 16, fill: s[0] === '-' ? '#8c0008' : '#066410' });
  add('text', { x: x + 2, y: y + 12, class: 'pl' }, s);
}

// Deal arrows: b, r point right; p, o point left
const marks = 'bp134,362 bp138,364 ro155,376 ro168,378 bp198,378 p181,394 ro202,398 bp243,361 bp229,367 bp226,376 ro235,385 ro254,385 ro264,379 p268,393 bp281,379 bp288,371 bp307,377 ro297,398 bp309,359 o315,352 b322,291 o326,295 b346,270 bp361,275 ro384,266 ro390,286 ro351,313 p393,304 p410,317 bp433,329 ro444,342 p452,357 rp461,383 rp460,401 p467,429 o534,401 b545,353 ro575,354 bp623,361 bp633,373 ro627,424 bp525,490 bp517,502 b500,525 ro509,563 rp513,602 o650,258 b662,249 ro693,224 bp707,200 bp727,200 bp730,213 ro719,238 ro763,204 ro719,295 o786,129 bp777,170 ro797,167 r803,176 bp855,204 o854,213 b864,215 bp845,256 ro873,254 ro877,268 p890,295 p900,334 b928,274 b912,298 bp1017,209 ro1003,228 ro1025,253 ro1025,261 bp1052,259 bp1095,259 bp1071,279 bp1087,277 ro1061,298 ro1075,305 bp1139,232 ro1165,242 ro1139,253 r1172,253';
for (const m of marks.split(' ')) {
  const [, kind, xs, ys] = m.match(/([a-z]+)(\d+),(\d+)/);
  for (const k of kind) {
    const right = k === 'b' || k === 'r';
    const shift = kind.length === 2 ? (right ? -2 : 2) : 0;
    const fill = { b: '#4068d0', r: '#e01414', p: '#e49be4', o: '#e8a040' }[k];
    const d = right ? 'M-4-2h3v-3l5 5-5 5v-3h-3z' : 'M3-5v10l-5-5z';
    add('path', { d, fill, stroke: '#fff', transform: `translate(${+xs + shift},${ys})` });
  }
}

// Frame, captions and time axis
add('path', { d: 'M109 94h4v640h-4z', fill: '#000' });
add('path', { d: 'M2600 96.500H113.500V718.500H2600', fill: 'none', stroke: '#fff' });
add('path', { d: 'M114 713v5h5z', fill: '#8090a0' });
add('path', { d: 'M1158 97h12l-6 6z', fill: '#8090a0' });
add('text', { x: 118, y: 108, class: 'head' }, 'GBPJPY,H4');
add('rect', { x: 135, y: 98, width: 16, height: 11, fill: '#10131c' });
add('path', { d: 'M137 102.500h8M141.500 98v8', stroke: '#ff0' });
add('text', { x: 156, y: 106, class: 'driver' }, 'MTDriver统计 ,V3.25');
add('text', { x: 120, y: 158 }, '#1793456114 tp');
add('text', { x: 120, y: 323 }, '#1793456117 tp');
add('text', { x: 120, y: 337 }, '#1793456055 tp');
add('text', { x: 120, y: 351 }, '#1793456121 buy 1.80');
add('text', { x: 120, y: 351 }, '#1793456055 buy 0.36');
['15 Aug 2022', '22 Aug 08:00', '29 Aug 12:00', '5 Sep 16:00', '12 Sep 20:00', '20 Sep 00:00', '27 Sep 04:00', '4 Oct 12:00', '11 Oct 20:00', '19 Oct 04:00', '26 Oct 12:00', '2 Nov 20:00', '10 Nov 04:00', '17 Nov 12:00', '24 Nov 20:00', '2 Dec 04:00', '9 Dec 12:00'].forEach((s, i) => {
  const x = 113 + i * 64;
  add('text', { x, y: 731 }, s);
  add('path', { d: `M${x + 1.5} 719v3`, stroke: '#fff' });
});

// Site mark
const mark = document.getElementById('mark');
for (let y = 138; y < 1600; y += 250)
  for (let x = -125; x < 2600; x += 250)
    add('text', { transform: `translate(${x},${y}) rotate(-36)` }, 'eahub.cn', mark);
```
